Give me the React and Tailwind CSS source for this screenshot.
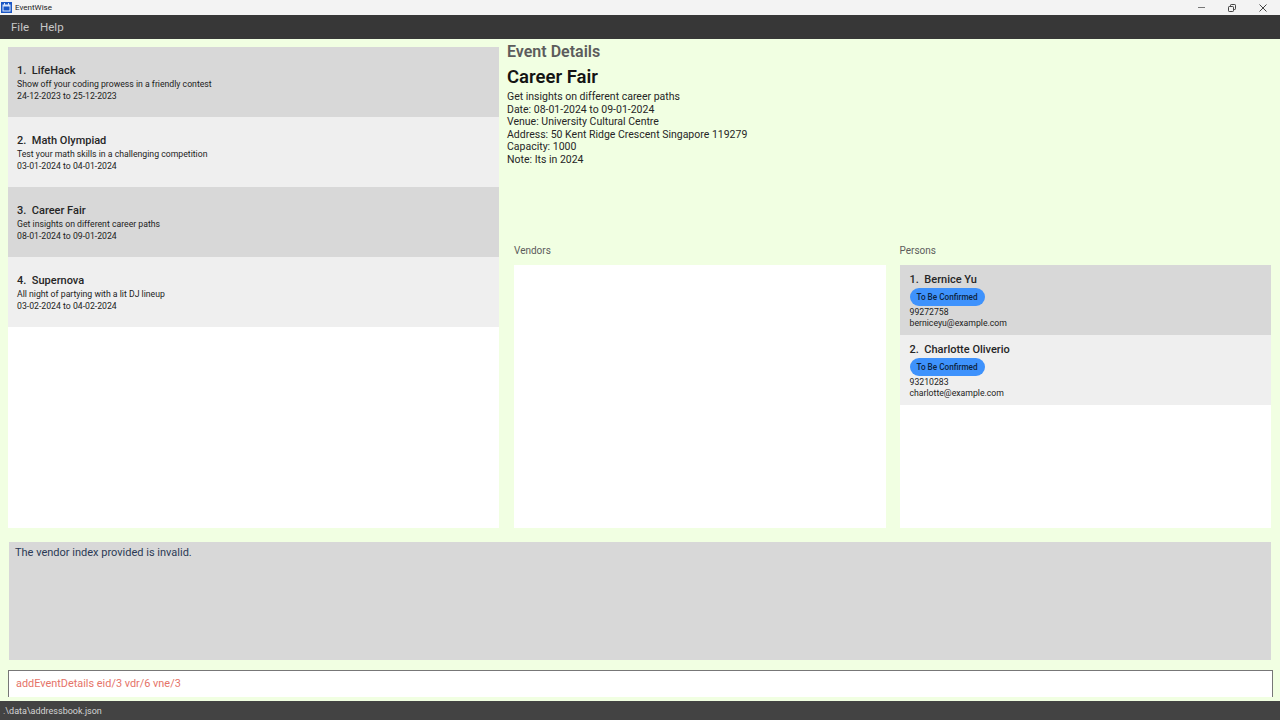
import React from 'react';

const events = [
  { name: 'LifeHack', desc: 'Show off your coding prowess in a friendly contest', date: '24-12-2023 to 25-12-2023' },
  { name: 'Math Olympiad', desc: 'Test your math skills in a challenging competition', date: '03-01-2024 to 04-01-2024' },
  { name: 'Career Fair', desc: 'Get insights on different career paths', date: '08-01-2024 to 09-01-2024' },
  { name: 'Supernova', desc: 'All night of partying with a lit DJ lineup', date: '03-02-2024 to 04-02-2024' },
];

const persons = [
  { name: 'Bernice Yu', phone: '99272758', email: 'berniceyu@example.com' },
  { name: 'Charlotte Oliverio', phone: '93210283', email: 'charlotte@example.com' },
];

function EventCard({ index, event }) {
  const bg = index % 2 === 0 ? 'bg-[#d8d8d8]' : 'bg-[#efefef]';
  return (
    <div className={`${bg} h-[70px] pl-[9px] pt-[16px] text-[#1c1c1c]`}>
      <div className="text-[11px] leading-[15px] font-medium text-[#262626]">{index + 1}.&nbsp; {event.name}</div>
      <div className="text-[8.7px] leading-[11.5px] mt-[1px]">{event.desc}</div>
      <div className="text-[8.7px] leading-[11.5px]">{event.date}</div>
    </div>
  );
}

function PersonCard({ index, person }) {
  const bg = index % 2 === 0 ? 'bg-[#d8d8d8]' : 'bg-[#efefef]';
  return (
    <div className={`${bg} h-[70px] pl-[10px] pt-[7px] text-[#1c1c1c]`}>
      <div className="text-[11px] leading-[15px] font-medium text-[#262626]">{index + 1}.&nbsp; {person.name}</div>
      <div className="mt-[1px] w-[75px] h-[18px] pt-[1px] rounded-full bg-[#3e92fc] text-[#0d2440] text-[8.2px] font-medium flex items-center justify-center">To Be Confirmed</div>
      <div className="text-[8.7px] leading-[11.5px] mt-[1px]">{person.phone}</div>
      <div className="text-[8.7px] leading-[11.5px]">{person.email}</div>
    </div>
  );
}

export default function App() {
  return (
    <div className="w-[1280px] h-[720px] flex flex-col overflow-hidden bg-[#f1ffe2] font-['Roboto',sans-serif]">
      {/* title bar */}
      <div className="h-[15px] bg-[#f3f3f3] flex items-center shrink-0">
        <svg width="11" height="11" viewBox="0 0 11 11" className="ml-[1px]">
          <rect width="11" height="11" fill="#1a56c4" />
          <rect x="2" y="3" width="7" height="6" fill="none" stroke="#dbe7fb" strokeWidth="1" />
          <rect x="2" y="3" width="7" height="1.5" fill="#dbe7fb" />
          <rect x="3" y="1" width="1" height="2" fill="#dbe7fb" />
          <rect x="7" y="1" width="1" height="2" fill="#dbe7fb" />
        </svg>
        <span className="ml-[3px] text-[8px] text-[#222]">EventWise</span>
        <div className="ml-auto flex items-center h-full">
          <svg width="7" height="8" viewBox="0 0 7 8" className="mr-[23px]"><path d="M0 3.5H7" stroke="#777" strokeWidth="1" /></svg>
          <svg width="8" height="8" viewBox="0 0 8 8" className="mr-[23px]"><path d="M1.2 2.5H4.8Q5.5 2.5 5.5 3.2V6.8Q5.5 7.5 4.8 7.5H1.2Q0.5 7.5 0.5 6.8V3.2Q0.5 2.5 1.2 2.5ZM2.5 2.5V1.2Q2.5 0.5 3.2 0.5H6.8Q7.5 0.5 7.5 1.2V4.8Q7.5 5.5 6.8 5.5H5.5" stroke="#444" strokeWidth="1" fill="none" /></svg>
          <svg width="8" height="8" viewBox="0 0 8 8" className="mr-[13px]"><path d="M0.5 0.5L7.5 7.5M7.5 0.5L0.5 7.5" stroke="#444" strokeWidth="1" /></svg>
        </div>
      </div>

      {/* menu bar */}
      <div className="h-[24px] bg-[#373737] shrink-0 flex items-center pl-[11px] pt-[1px] gap-[11px] text-[11.5px] text-[#c8c8c8]">
        <span>File</span>
        <span>Help</span>
      </div>

      {/* main */}
      <div className="flex-1 flex flex-col min-h-0">
        <div className="h-[489px] pt-[8px] pl-[8px] pr-[8px] flex gap-[8px] shrink-0">
          <div className="w-[491px] h-[481px] bg-white shrink-0">
            {events.map((e, i) => <EventCard key={e.name} index={i} event={e} />)}
          </div>
          <div className="flex-1 flex flex-col">
            <div className="text-[16px] leading-[20px] font-semibold text-[#5c5c5c] -mt-[5px]">Event Details</div>
            <div className="text-[18.5px] leading-[26px] font-semibold text-[#141414] mt-[2px]">Career Fair</div>
            <div className="text-[10.5px] leading-[12.6px] text-[#262626] mt-[1px]">
              <div>Get insights on different career paths</div>
              <div>Date: 08-01-2024 to 09-01-2024</div>
              <div>Venue: University Cultural Centre</div>
              <div>Address: 50 Kent Ridge Crescent Singapore 119279</div>
              <div>Capacity: 1000</div>
              <div>Note: Its in 2024</div>
            </div>
            <div className="flex-1 flex gap-[14px] pl-[7px] pt-[76px] mr-[1px]">
              <div className="flex-1 flex flex-col">
                <div className="text-[10px] leading-[14px] pt-[1px] text-[#5c5c5c] mb-[7px] h-[15px]">Vendors</div>
                <div className="flex-1 bg-white"></div>
              </div>
              <div className="flex-1 flex flex-col">
                <div className="text-[10px] leading-[14px] pt-[1px] text-[#5c5c5c] mb-[7px] h-[15px]">Persons</div>
                <div className="flex-1 bg-white">
                  {persons.map((p, i) => <PersonCard key={p.name} index={i} person={p} />)}
                </div>
              </div>
            </div>
          </div>
        </div>

        <div className="mx-[9px] mt-[14px] h-[118px] bg-[#d8d8d8] pl-[6px] pt-[3px] text-[11px] leading-[15px] text-[#2b3a55] w-[1262px] shrink-0">
          The vendor index provided is invalid.
        </div>

        <div className="ml-[8px] mt-[10px] w-[1265px] h-[27px] bg-white border-t border-x border-[#777] pl-[7px] text-[10.9px] leading-[25px] text-[#e57368] shrink-0">
          addEventDetails eid/3 vdr/6 vne/3
        </div>
      </div>

      {/* status bar */}
      <div className="h-[19px] bg-[#434343] shrink-0 mt-[3px] pl-[3px] text-[9px] leading-[21px] text-[#d4d4d4]">.\data\addressbook.json</div>
    </div>
  );
}
